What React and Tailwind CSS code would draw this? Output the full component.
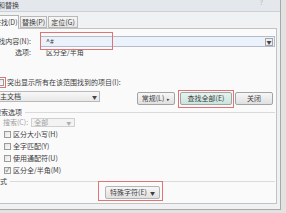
import React from 'react';

// small win7-ish checkbox
function Box({ checked }) {
  return (
    <div className="w-[7px] h-[7px] border border-[#9a9b9b] bg-gradient-to-br from-[#e4e4e4] to-[#fbfbfb] flex items-center justify-center text-[6px] leading-none text-[#4a4a4a]">
      {checked ? '✓' : ''}
    </div>
  );
}

function Option({ label, checked }) {
  return (
    <div className="h-[12px] flex items-center pl-[13px]">
      <Box checked={checked} />
      <span className="ml-[2px] whitespace-nowrap">{label}</span>
    </div>
  );
}

function Btn({ children, className = '' }) {
  return (
    <div
      className={
        'h-[13px] rounded-[2px] border border-[#a3a3a3] flex items-center justify-center whitespace-nowrap ' +
        className
      }
    >
      {children}
    </div>
  );
}

export default function App() {
  return (
    <div className="w-[286px] h-[213px] overflow-hidden bg-[#e2e2e2] text-[7px] leading-none text-[#3c3c3c] font-['Noto_Sans_CJK_SC','Noto_Sans',sans-serif]">
      <div className="-ml-[12px] w-[293px] h-[210px] bg-[#f0f1f3] border-r border-b border-[#a8a8a8] flex flex-col">
        {/* title bar */}
        <div className="h-[12px] shrink-0 bg-[#e4e7eb] border-b border-[#ccd1d7] flex items-center justify-between">
          <span className="-ml-[4px] text-[#444] whitespace-nowrap">查找和替换</span>
          <span className="mr-[17px] -mt-[7px] text-[#b5b5b5]">?</span>
        </div>

        {/* tabs */}
        <div className="mt-[2px] flex items-end pl-[4px] h-[14px] shrink-0">
          <div className="h-[14px] w-[27px] bg-[#fbfbfb] border border-b-0 border-[#b4b4b4] flex items-center pl-[1px] whitespace-nowrap relative z-10 -mb-[1px]">
            查找(D)
          </div>
          <div className="ml-[1px] h-[12px] w-[27px] bg-gradient-to-b from-[#f6f6f6] to-[#e6e6e6] border border-[#b8b8b8] flex items-center justify-center whitespace-nowrap">
            替换(P)
          </div>
          <div className="ml-[1px] h-[12px] w-[30px] bg-gradient-to-b from-[#f6f6f6] to-[#e6e6e6] border border-[#b8b8b8] flex items-center justify-center whitespace-nowrap">
            定位(G)
          </div>
        </div>

        {/* panel */}
        <div className="ml-[2px] w-[287px] h-[176px] bg-[#fafafa] border border-[#c2c2c2] flex flex-col">
          {/* find what */}
          <div className="mt-[7px] flex items-center h-[11px]">
            <div className="w-[40px] flex justify-end whitespace-nowrap">查找内容(N):</div>
            <div className="ml-[9px] w-[235px] h-[11px] bg-[#ebf2fb] border border-[#b4bcc8] flex items-center justify-between relative">
              <span className="pl-[5px] text-[#333]">^#</span>
              <div className="mr-[1px] w-[8px] h-[8px] border border-[#a5a5a5] bg-[#eeeeee] flex items-center justify-center text-[5px] text-[#444]">▼</div>
              <div className="absolute -left-[1px] -top-[5px] w-[73px] h-[18px] border border-[#de7474]"></div>
            </div>
          </div>
          <div className="mt-[1px] flex items-center h-[9px]">
            <div className="w-[40px] flex justify-end">选项:</div>
            <span className="ml-[15px] whitespace-nowrap">区分全/半角</span>
          </div>

          {/* highlight */}
          <div className="mt-[21px] flex items-center h-[9px] pl-[6px]">
            <div className="relative">
              <Box />
              <div className="absolute -left-[2px] -top-[2px] w-[11px] h-[11px] border border-[#de7474]"></div>
            </div>
            <span className="ml-[3px] whitespace-nowrap">突出显示所有在该范围找到的项目(I):</span>
          </div>

          <div className="mt-[4px] flex items-start h-[15px] pl-[6px]">
            <div className="w-[103px] h-[11px] border border-[#b9b9b9] bg-gradient-to-b from-[#f8f8f8] to-[#e8e8e8] flex items-center justify-between">
              <span className="pl-[2px]">主文档</span>
              <span className="mr-[2px] text-[5px] text-[#444]">▼</span>
            </div>
            <Btn className="ml-[37px] mt-[1px] w-[38px] bg-gradient-to-b from-[#f7f7f7] to-[#e0e0e0]">
              常规(L) <span className="ml-[3px] text-[5px]">▸</span>
            </Btn>
            <div className="ml-[5px] relative mt-[1px]">
              <Btn className="w-[52px] border-[#79adb4] bg-gradient-to-b from-[#e4f3ef] to-[#cae5dd]">查找全部(E)</Btn>
              <div className="absolute -left-[2px] -top-[2px] w-[56px] h-[18px] border border-[#de7474]"></div>
            </div>
            <Btn className="ml-[3px] mt-[1px] w-[38px] bg-gradient-to-b from-[#f7f7f7] to-[#e0e0e0]">关闭</Btn>
          </div>

          {/* search options group */}
          <div className="mt-[2px] flex items-center h-[8px] pl-[3px]">
            <span className="whitespace-nowrap">搜索选项</span>
            <div className="ml-[3px] flex-1 mr-[1px] h-px bg-[#dadada]"></div>
          </div>
          <div className="mt-[2px] flex items-center h-[9px] pl-[12px]">
            <span className="text-[#a0a0a0] whitespace-nowrap">搜索(C):</span>
            <div className="ml-[3px] w-[44px] h-[9px] border border-[#d0d0d0] bg-[#f3f3f3] flex items-center justify-between">
              <span className="pl-[2px] text-[#a0a0a0]">全部</span>
              <span className="mr-[3px] text-[5px] text-[#b0b0b0]">▼</span>
            </div>
          </div>
          <div className="mt-[1px]">
            <Option label="区分大小写(H)" />
            <Option label="全字匹配(Y)" />
            <Option label="使用通配符(U)" />
            <Option label="区分全/半角(M)" checked />
          </div>

          {/* format group */}
          <div className="mt-[1px] flex items-center h-[8px] pl-[2px]">
            <span className="whitespace-nowrap">格式</span>
            <div className="ml-[3px] flex-1 mr-[1px] h-px bg-[#dadada]"></div>
          </div>
          <div className="mt-[1px] pl-[114px]">
            <div className="relative w-[55px]">
              <Btn className="h-[11px] w-[55px] bg-gradient-to-b from-[#f7f7f7] to-[#e0e0e0] border-[#b4b4b4]">
                特殊字符(E) <span className="ml-[3px] text-[5px]">▼</span>
              </Btn>
              <div className="absolute -left-[7px] -top-[5px] w-[65px] h-[20px] border border-[#de7474]"></div>
            </div>
          </div>
        </div>
      </div>
    </div>
  );
}
